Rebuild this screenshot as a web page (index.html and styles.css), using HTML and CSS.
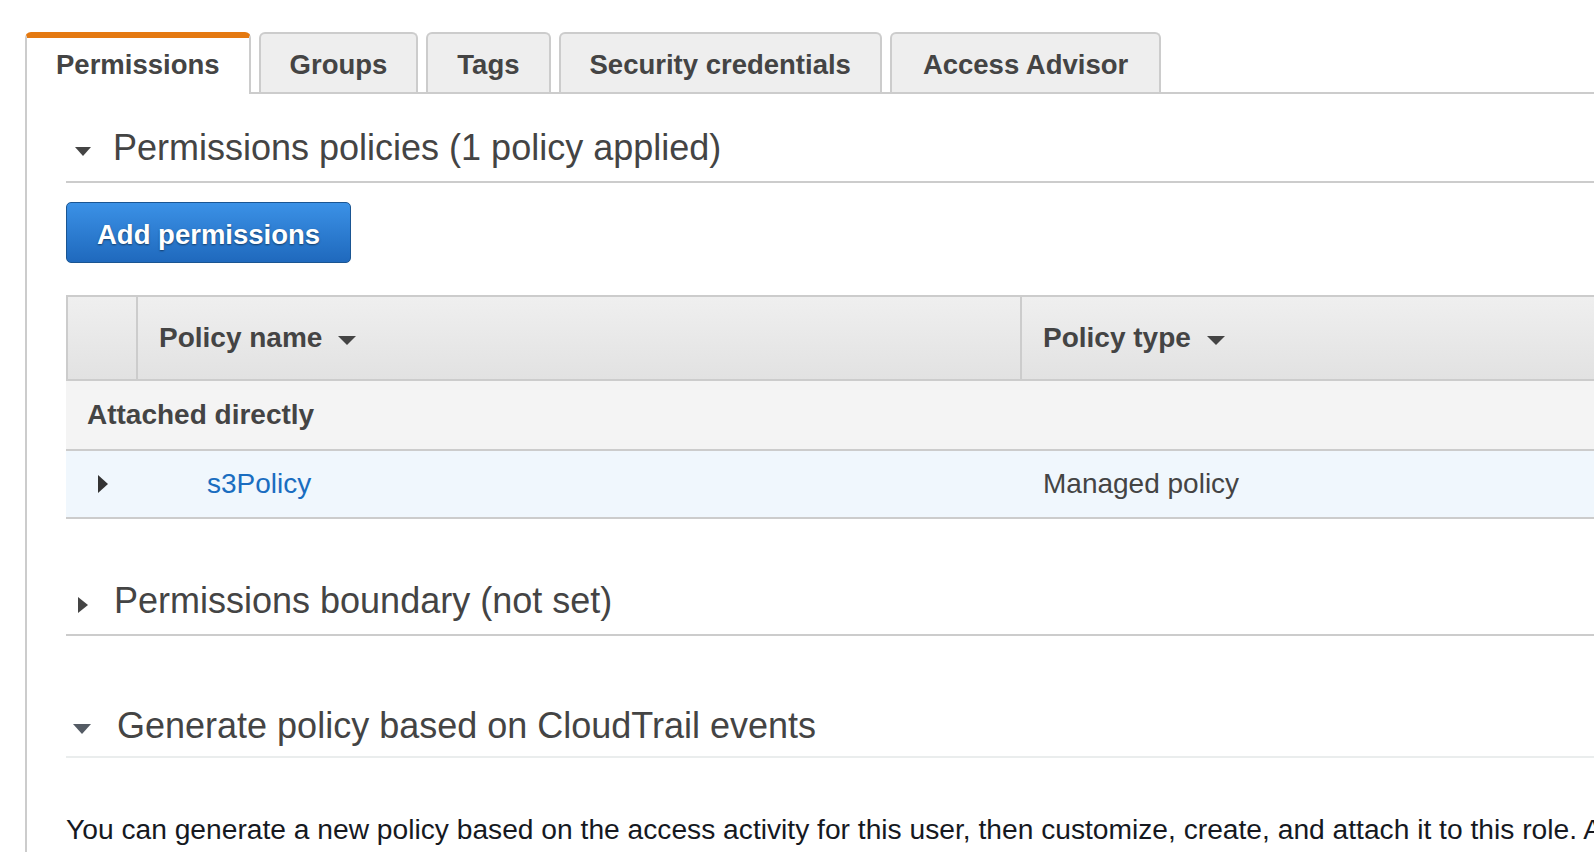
FILE: index.html
```html
<!DOCTYPE html>
<html lang="en">
<head>
<meta charset="utf-8">
<title>User permissions</title>
<link rel="stylesheet" href="styles.css">
</head>
<body>
<div class="page">
  <nav class="tabs">
    <div class="tab tab-active">Permissions</div>
    <div class="tab">Groups</div>
    <div class="tab">Tags</div>
    <div class="tab">Security credentials</div>
    <div class="tab tab-wide">Access Advisor</div>
  </nav>
  <main class="panel">
    <section class="section">
      <h2 class="section-head head-policies"><span class="caret-down"></span>Permissions policies (1 policy applied)</h2>
      <button class="btn-primary" type="button">Add permissions</button>
      <div class="policy-table">
        <div class="thead">
          <div class="th th-expand"></div>
          <div class="th th-name">Policy name<span class="sort-caret"></span></div>
          <div class="th th-type">Policy type<span class="sort-caret"></span></div>
        </div>
        <div class="group-row">Attached directly</div>
        <div class="data-row">
          <div class="td td-expand"><span class="row-caret"></span></div>
          <div class="td td-name"><a class="policy-link" href="#">s3Policy</a></div>
          <div class="td td-type">Managed policy</div>
        </div>
      </div>
    </section>
    <section class="section">
      <h2 class="section-head head-boundary"><span class="caret-right"></span>Permissions boundary (not set)</h2>
    </section>
    <section class="section">
      <h2 class="section-head head-generate"><span class="caret-down caret-generate"></span>Generate policy based on CloudTrail events</h2>
      <p class="generate-text">You can generate a new policy based on the access activity for this user, then customize, create, and attach it to this role. AWS uses your CloudTrail events to identify the services and actions used and generate a policy.</p>
    </section>
  </main>
</div>
</body>
</html>
```

FILE: styles.css
```css
html, body {
  margin: 0;
  padding: 0;
  overflow: hidden;
  background: #fff;
}

body {
  font-family: "Liberation Sans", Arial, Helvetica, sans-serif;
  color: #444;
}

.page {
  width: 1800px;
  padding: 32px 0 0 25px;
}

/* Tabs */
.tabs {
  display: flex;
  align-items: flex-start;
  gap: 8px;
  border-bottom: 2px solid #ccc;
}

.tab {
  box-sizing: border-box;
  height: 60px;
  padding: 4px 29px 0;
  border: 2px solid #ccc;
  border-bottom: 0;
  border-radius: 6px 6px 0 0;
  background: #eee;
  display: flex;
  align-items: center;
  font-size: 27.5px;
  font-weight: bold;
  color: #444;
  white-space: nowrap;
}

.tab-wide {
  padding: 4px 31px 0;
}

.tab-active {
  height: 62px;
  margin-bottom: -2px;
  padding: 0 29px 2px;
  background: #fff;
  border-top: 6px solid #e47911;
}

/* Panel */
.panel {
  border-left: 2px solid #ccc;
  padding: 32px 0 0 39px;
  min-height: 820px;
}

.section-head {
  margin: 0;
  display: flex;
  align-items: center;
  font-size: 36px;
  font-weight: normal;
  line-height: 44px;
  color: #444;
  border-bottom: 2px solid #ccc;
  white-space: nowrap;
}

.head-policies {
  padding: 0 0 11px 9px;
}

.head-boundary {
  margin-top: 60px;
  padding: 0 0 11px 12px;
}

.head-generate {
  margin-top: 68px;
  padding: 0 0 8px 7px;
  border-bottom-color: #eaeded;
}

.caret-down {
  width: 0;
  height: 0;
  border-left: 8.5px solid transparent;
  border-right: 8.5px solid transparent;
  border-top: 9px solid #444;
  margin: 6px 22px 0 0;
}

.caret-generate {
  border-left-width: 9px;
  border-right-width: 9px;
  border-top: 10px solid #545b64;
  margin: 5px 26px 0 0;
}

.caret-right {
  width: 0;
  height: 0;
  border-top: 8.5px solid transparent;
  border-bottom: 8.5px solid transparent;
  border-left: 10px solid #444;
  margin: 8px 26px 0 0;
}

/* Button */
.btn-primary {
  display: block;
  box-sizing: border-box;
  margin-top: 19px;
  height: 61px;
  padding: 5px 30px 0;
  border: 1px solid #1a5592;
  border-radius: 5px;
  background: linear-gradient(#3b91e6, #1f69bd);
  color: #fff;
  font-family: "Liberation Sans", Arial, Helvetica, sans-serif;
  font-size: 27.5px;
  font-weight: bold;
  line-height: 54px;
  text-shadow: 0 1px 2px rgba(0, 0, 0, 0.5);
  cursor: pointer;
}

/* Table */
.policy-table {
  margin-top: 32px;
  font-size: 28px;
}

.thead {
  display: flex;
  height: 82px;
  border: 2px solid #ccc;
  background: linear-gradient(#efefef, #e2e2e2);
}

.th {
  display: flex;
  align-items: center;
  font-weight: bold;
  color: #444;
  white-space: nowrap;
}

.th-expand {
  width: 68px;
  border-right: 2px solid #ccc;
}

.th-name {
  box-sizing: border-box;
  width: 884px;
  padding-left: 21px;
  border-right: 2px solid #ccc;
}

.th-type {
  padding-left: 21px;
}

.sort-caret {
  width: 0;
  height: 0;
  border-left: 9px solid transparent;
  border-right: 9px solid transparent;
  border-top: 9px solid #444;
  margin: 5px 0 0 16px;
}

.group-row {
  display: flex;
  align-items: center;
  height: 68px;
  padding-left: 21px;
  background: #f4f4f4;
  border-bottom: 2px solid #ccc;
  font-weight: bold;
  color: #444;
}

.data-row {
  display: flex;
  align-items: center;
  height: 66px;
  background: #f0f7fd;
  border-bottom: 2px solid #ccc;
  color: #444;
}

.td-expand {
  box-sizing: border-box;
  width: 72px;
  padding-left: 32px;
  display: flex;
  align-items: center;
}

.row-caret {
  width: 0;
  height: 0;
  border-top: 9px solid transparent;
  border-bottom: 9px solid transparent;
  border-left: 10px solid #333;
}

.td-name {
  box-sizing: border-box;
  width: 884px;
  padding-left: 69px;
}

.td-type {
  padding-left: 21px;
}

.policy-link {
  color: #1a6dc0;
  text-decoration: none;
}

.generate-text {
  margin: 54px 0 0;
  font-size: 28.2px;
  line-height: 34px;
  color: #16191f;
  white-space: nowrap;
}
```
